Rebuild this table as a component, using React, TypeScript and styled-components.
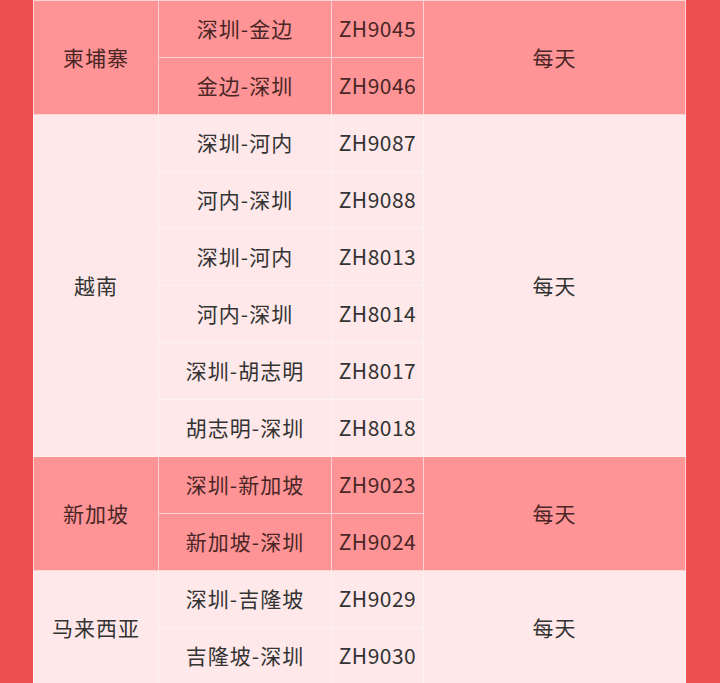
import React from "react";
import styled, { createGlobalStyle } from "styled-components";

const Global = createGlobalStyle`
  html, body {
    margin: 0;
    padding: 0;
    background: #ee5052;
  }
  body {
    font-family: "Noto Sans CJK SC", "Noto Sans", sans-serif;
  }
`;

const Page = styled.div`
  padding: 0 35px 0 33px;
  height: 683px;
  overflow: hidden;
`;

const Table = styled.table`
  width: 652px;
  table-layout: fixed;
  border-collapse: collapse;
  border-top: 1px solid #fde4e4;
`;

const Col = styled.col<{ $w: number }>`
  width: ${(p) => p.$w}px;
`;

const Row = styled.tr`
  height: 57px;
`;

const Cell = styled.td<{ $dark: boolean; $latin?: boolean }>`
  padding: 0 0 1px;
  text-align: center;
  vertical-align: middle;
  font-size: 21px;
  letter-spacing: ${(p) => (p.$latin ? "0.5px" : "1px")};
  line-height: 1;
  color: ${(p) => (p.$dark ? "#4a2626" : "#333333")};
  background: ${(p) => (p.$dark ? "#fe9495" : "#fee8e9")};
  border: 1px solid ${(p) => (p.$dark ? "#fdd3d3" : "#fbf3f3")};
`;

type Group = {
  country: string;
  freq: string;
  flights: [string, string][];
};

const groups: Group[] = [
  {
    country: "柬埔寨",
    freq: "每天",
    flights: [
      ["深圳-金边", "ZH9045"],
      ["金边-深圳", "ZH9046"],
    ],
  },
  {
    country: "越南",
    freq: "每天",
    flights: [
      ["深圳-河内", "ZH9087"],
      ["河内-深圳", "ZH9088"],
      ["深圳-河内", "ZH8013"],
      ["河内-深圳", "ZH8014"],
      ["深圳-胡志明", "ZH8017"],
      ["胡志明-深圳", "ZH8018"],
    ],
  },
  {
    country: "新加坡",
    freq: "每天",
    flights: [
      ["深圳-新加坡", "ZH9023"],
      ["新加坡-深圳", "ZH9024"],
    ],
  },
  {
    country: "马来西亚",
    freq: "每天",
    flights: [
      ["深圳-吉隆坡", "ZH9029"],
      ["吉隆坡-深圳", "ZH9030"],
    ],
  },
];

export default function App() {
  return (
    <>
      <Global />
      <Page>
        <Table>
          <colgroup>
            <Col $w={125} />
            <Col $w={173} />
            <Col $w={92} />
            <Col $w={262} />
          </colgroup>
          <tbody>
            {groups.map((g, gi) => {
              const dark = gi % 2 === 0;
              return g.flights.map(([route, code], i) => (
                <Row key={`${gi}-${i}`}>
                  {i === 0 && (
                    <Cell $dark={dark} rowSpan={g.flights.length}>
                      {g.country}
                    </Cell>
                  )}
                  <Cell $dark={dark}>{route}</Cell>
                  <Cell $dark={dark} $latin>
                    {code}
                  </Cell>
                  {i === 0 && (
                    <Cell $dark={dark} rowSpan={g.flights.length}>
                      {g.freq}
                    </Cell>
                  )}
                </Row>
              ));
            })}
          </tbody>
        </Table>
      </Page>
    </>
  );
}
